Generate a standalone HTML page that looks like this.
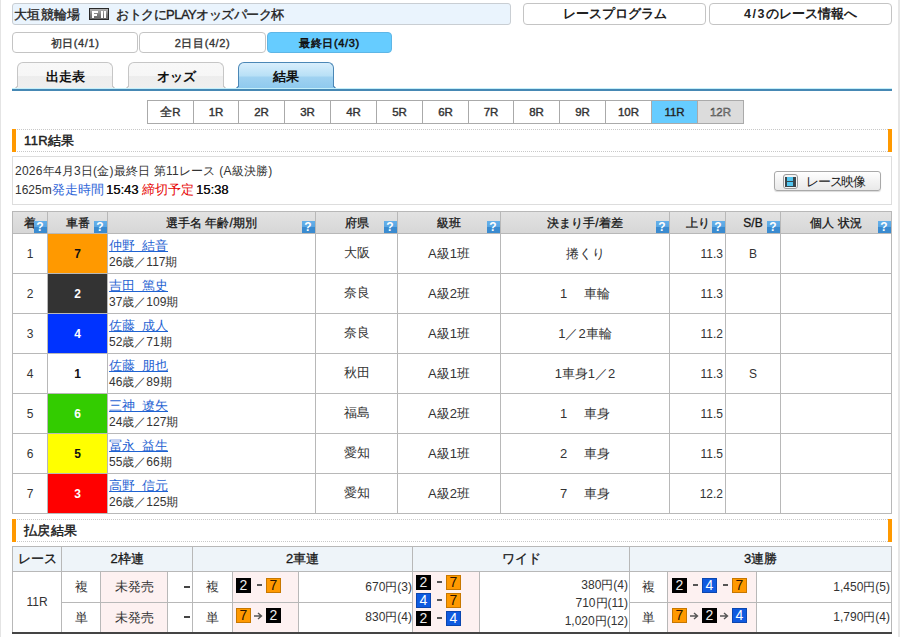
<!DOCTYPE html>
<html><head><meta charset="utf-8"><style>
*{box-sizing:border-box}
html,body{margin:0;padding:0}
body{width:900px;height:637px;overflow:hidden;position:relative;background:#fff;font-family:"Liberation Sans",sans-serif;font-size:12px;color:#333}
.a{position:absolute;white-space:nowrap}
.pbl{left:0;top:0;width:1px;height:637px;background:#e4e4e4}
.pbr{left:898px;top:0;width:2px;height:637px;background:#e6e6e6}
.ttl{left:12px;top:3px;width:499px;height:22px;border:1px solid #c9ced3;border-radius:3px;background:#eaf4fd;font-weight:normal;-webkit-text-stroke:0.35px #222;font-size:13px;color:#222;line-height:20px}
.btn{top:3px;height:22px;border:1px solid #c4c4c4;border-radius:4px;background:#fff;font-weight:bold;font-size:12.5px;color:#222;text-align:center;line-height:21px}
.day{top:32px;height:21px;border:1px solid #c4c4c4;border-radius:4px;background:#fff;font-weight:normal;-webkit-text-stroke:0.35px #333;font-size:11px;letter-spacing:0.6px;color:#333;text-align:center;line-height:20px}
.day.sel{background:#66ccff;border-color:#5eb6e6;-webkit-text-stroke:0.5px #111;color:#111}
.tab{top:62px;height:27px;width:96px;border:1px solid #c6c6c6;border-bottom:none;border-radius:6px 6px 0 0;background:linear-gradient(#f8f8f8 0,#f6f6f6 13px,#ededed 13px,#efefef 100%);font-weight:bold;font-size:13px;color:#111;text-align:center;line-height:28px}
.tab:before,.tab:after{content:'';position:absolute;bottom:0;width:5px;height:5px}
.tab:before{left:-5px;background:radial-gradient(circle at 0 0,transparent 4px,#c6c6c6 4.5px,#c6c6c6 5.2px,#efefef 5.5px)}
.tab:after{right:-5px;background:radial-gradient(circle at 100% 0,transparent 4px,#c6c6c6 4.5px,#c6c6c6 5.2px,#efefef 5.5px)}
.tab.sel:before{background:radial-gradient(circle at 0 0,transparent 4px,#4b87b6 4.5px,#4b87b6 5.2px,#8ec9ee 5.5px)}
.tab.sel:after{background:radial-gradient(circle at 100% 0,transparent 4px,#4b87b6 4.5px,#4b87b6 5.2px,#8ec9ee 5.5px)}
.tab.sel{border-color:#4b87b6;background:linear-gradient(#d8eefc 0,#b8e0f6 13px,#a0d2f1 14px,#8ec9ee 100%)}
.tline{left:12px;top:88px;width:880px;height:1px;background:#c4f0fb}
.tline2{left:12px;top:89px;width:880px;height:2px;background:#4688b4}
.f2{left:76px;top:4px;width:20px;height:12px;background:linear-gradient(#b4b4b4,#7a7a7a 60%,#6a6a6a);border:1px solid #2a2a2a;text-shadow:none}
.f2 i{position:absolute;background:#fff}
.rn{top:100px;height:24px;border:1px solid #aaa;background:#fff;font-weight:normal;-webkit-text-stroke:0.4px #333;font-size:11.5px;color:#333;text-align:center;line-height:22px}
.hd{left:12px;width:880px;height:23px;border-top:1px dotted #c8c8c8;border-bottom:1px dotted #c8c8c8;font-weight:normal;-webkit-text-stroke:0.45px #222;font-size:13px;letter-spacing:0.4px;color:#222;line-height:21px}
.ob{width:4px;background:#f90}
.info{left:12px;top:156px;width:880px;height:49px;border:1px solid #ddd}
.vbtn{left:774px;top:171px;width:107px;height:20px;border:1px solid #a9a9a9;border-radius:3px;background:linear-gradient(#fff,#f3f3f3 50%,#e9e9e9);box-shadow:0 1px 1px rgba(0,0,0,.15);font-size:13px;color:#222;line-height:18px}
.vl{width:1px;background:#b8b8b8}
.hl{height:1px;background:#b8b8b8}
.th{background:linear-gradient(#e3e3e3,#d6d6d6)}
.thx{font-weight:normal;-webkit-text-stroke:0.3px #222;font-size:12px;color:#111;text-align:center;line-height:24px}
.q{width:13px;height:12px;background:linear-gradient(#64b0ea 0,#5aa6e2 50%,#3a8bd0 50%,#3a8bd0 100%);color:#fff;font-weight:bold;font-size:12px;line-height:13px;text-align:center;text-indent:-1px}
.td{font-size:12px;color:#333;text-align:center}
.sh{font-weight:bold;font-size:12px;text-align:center}
.nb{display:inline-block;width:15px;height:15px;font-size:14px;line-height:15px;text-align:center;vertical-align:top;box-shadow:inset 0 0 0 1px rgba(0,0,0,.22)}
.sp{display:inline-block;width:15px;height:15px;position:relative;vertical-align:top}
.sp i{position:absolute;left:6px;top:6px;width:5px;height:1.5px;background:#555}
.sp svg{position:absolute;left:3px;top:4px}
.cb{height:15px;line-height:15px}
.nm{color:#1f63d2;text-decoration:underline;font-size:12px}
</style></head><body>
<div class="a pbl"></div><div class="a pbr"></div>
<div class="a ttl"><span class="a" style="left:1px;top:1px;letter-spacing:0.3px">大垣競輪場</span><span class="a f2"><i style="left:2px;top:2px;width:2px;height:7px"></i><i style="left:2px;top:2px;width:6px;height:2px"></i><i style="left:2px;top:5px;width:5px;height:2px"></i><i style="left:11px;top:2px;width:2px;height:7px"></i><i style="left:14px;top:2px;width:2px;height:7px"></i></span><span class="a" style="left:103px;top:1px;letter-spacing:-0.5px">おトクにPLAYオッズパーク杯</span></div>
<div class="a btn" style="left:523px;width:183px">レースプログラム</div>
<div class="a btn" style="left:709px;width:183px"><span style="letter-spacing:1.6px">4/3</span>のレース情報へ</div>
<div class="a day" style="left:12px;width:126px">初日(4/1)</div>
<div class="a day" style="left:139px;width:127px">2日目(4/2)</div>
<div class="a day sel" style="left:267px;width:125px">最終日(4/3)</div>
<div class="a tab" style="left:17px">出走表</div>
<div class="a tab" style="left:128px">オッズ</div>
<div class="a tab sel" style="left:238px">結果</div>
<div class="a tline"></div><div class="a tline2"></div>
<div class="a rn" style="left:147px;width:47px;">全R</div>
<div class="a rn" style="left:193px;width:46px;">1R</div>
<div class="a rn" style="left:238px;width:47px;">2R</div>
<div class="a rn" style="left:284px;width:47px;">3R</div>
<div class="a rn" style="left:330px;width:47px;">4R</div>
<div class="a rn" style="left:376px;width:47px;">5R</div>
<div class="a rn" style="left:422px;width:47px;">6R</div>
<div class="a rn" style="left:468px;width:46px;">7R</div>
<div class="a rn" style="left:513px;width:47px;">8R</div>
<div class="a rn" style="left:559px;width:47px;">9R</div>
<div class="a rn" style="left:605px;width:47px;">10R</div>
<div class="a rn" style="left:651px;width:47px;background:#66ccff;color:#111;">11R</div>
<div class="a rn" style="left:697px;width:47px;background:#dcdcdc;color:#999;">12R</div>
<div class="a hd" style="top:129px"><span class="a" style="left:12px;top:0">11R結果</span></div>
<div class="a ob" style="left:12px;top:129px;height:23px"></div><div class="a ob" style="left:888px;top:129px;height:23px"></div>
<div class="a info"></div>
<div class="a td" style="left:15px;top:162px;line-height:18px;text-align:left;letter-spacing:0.22px">2026年4月3日(金)最終日 第11レース (A級決勝)</div>
<div class="a td" style="left:15px;top:181px;line-height:18px;text-align:left">1625m</div>
<div class="a td" style="left:52px;top:181px;line-height:18px;text-align:left;color:#2f66d8;font-size:13px">発走時間</div>
<div class="a td" style="left:106px;top:181px;line-height:18px;text-align:left;color:#111;font-size:13px;text-shadow:0.3px 0 0 #111">15:43</div>
<div class="a td" style="left:142px;top:181px;line-height:18px;text-align:left;color:#e60000;font-size:13px">締切予定</div>
<div class="a td" style="left:196px;top:181px;line-height:18px;text-align:left;color:#111;font-size:13px;text-shadow:0.3px 0 0 #111">15:38</div>
<div class="a vbtn"><span class="a" style="left:8px;top:2px;width:15px;height:15px;border:1px solid #9a9a9a;border-radius:3px;background:#f4f4f4"></span><span class="a" style="left:10px;top:5px;width:11px;height:10px;background:#38464c"></span><span class="a" style="left:12px;top:5px;width:6px;height:4px;background:#52c6f0"></span><span class="a" style="left:12px;top:10px;width:6px;height:4px;background:#52c6f0"></span><span class="a" style="left:31px;top:0;font-size:13px;line-height:19px;letter-spacing:-1.2px">レース映像</span></div>
<div class="a th" style="left:12px;top:211px;width:880px;height:23px"></div>
<div class="a thx" style="left:13px;top:211px;width:34px;height:22px">着</div>
<div class="a q" style="left:34px;top:221px">?</div>
<div class="a thx" style="left:48px;top:211px;width:59px;height:22px">車番</div>
<div class="a q" style="left:94px;top:221px">?</div>
<div class="a thx" style="left:108px;top:211px;width:207px;height:22px">選手名 年齢/期別</div>
<div class="a q" style="left:302px;top:221px">?</div>
<div class="a thx" style="left:316px;top:211px;width:81px;height:22px">府県</div>
<div class="a q" style="left:384px;top:221px">?</div>
<div class="a thx" style="left:398px;top:211px;width:102px;height:22px">級班</div>
<div class="a q" style="left:487px;top:221px">?</div>
<div class="a thx" style="left:501px;top:211px;width:168px;height:22px">決まり手/着差</div>
<div class="a q" style="left:656px;top:221px">?</div>
<div class="a thx" style="left:670px;top:211px;width:55px;height:22px">上り</div>
<div class="a q" style="left:712px;top:221px">?</div>
<div class="a thx" style="left:726px;top:211px;width:54px;height:22px">S/B</div>
<div class="a q" style="left:767px;top:221px">?</div>
<div class="a thx" style="left:781px;top:211px;width:110px;height:22px">個人 状況</div>
<div class="a q" style="left:878px;top:221px">?</div>
<div class="a" style="left:48px;top:234px;width:59px;height:39px;background:#ff9900"></div>
<div class="a td" style="left:13px;top:235px;width:34px;line-height:39px">1</div>
<div class="a sh" style="left:48px;top:235px;width:59px;line-height:39px;color:#111">7</div>
<div class="a nm" style="left:109px;top:237px;line-height:17px;font-size:13px">仲野<span style="word-spacing:3.4px"> </span>結音</div>
<div class="a td" style="left:109px;top:254px;line-height:17px;text-align:left">26歳／117期</div>
<div class="a td" style="left:316px;top:233px;width:81px;line-height:39px;font-size:13px">大阪</div>
<div class="a td" style="left:398px;top:234px;width:102px;line-height:39px;font-size:13px">A級1班</div>
<div class="a td" style="left:501px;top:234px;width:168px;line-height:39px;font-size:13px">捲くり</div>
<div class="a td" style="left:670px;top:235px;width:53px;line-height:39px;text-align:right">11.3</div>
<div class="a td" style="left:726px;top:235px;width:54px;line-height:39px">B</div>
<div class="a" style="left:48px;top:274px;width:59px;height:39px;background:#333333"></div>
<div class="a td" style="left:13px;top:275px;width:34px;line-height:39px">2</div>
<div class="a sh" style="left:48px;top:275px;width:59px;line-height:39px;color:#fff">2</div>
<div class="a nm" style="left:109px;top:277px;line-height:17px;font-size:13px">吉田<span style="word-spacing:3.4px"> </span>篤史</div>
<div class="a td" style="left:109px;top:294px;line-height:17px;text-align:left">37歳／109期</div>
<div class="a td" style="left:316px;top:273px;width:81px;line-height:39px;font-size:13px">奈良</div>
<div class="a td" style="left:398px;top:274px;width:102px;line-height:39px;font-size:13px">A級2班</div>
<div class="a td" style="left:501px;top:274px;width:168px;line-height:39px;font-size:13px">1　 車輪</div>
<div class="a td" style="left:670px;top:275px;width:53px;line-height:39px;text-align:right">11.3</div>
<div class="a td" style="left:726px;top:275px;width:54px;line-height:39px"></div>
<div class="a" style="left:48px;top:314px;width:59px;height:39px;background:#0033ff"></div>
<div class="a td" style="left:13px;top:315px;width:34px;line-height:39px">3</div>
<div class="a sh" style="left:48px;top:315px;width:59px;line-height:39px;color:#fff">4</div>
<div class="a nm" style="left:109px;top:317px;line-height:17px;font-size:13px">佐藤<span style="word-spacing:3.4px"> </span>成人</div>
<div class="a td" style="left:109px;top:334px;line-height:17px;text-align:left">52歳／71期</div>
<div class="a td" style="left:316px;top:313px;width:81px;line-height:39px;font-size:13px">奈良</div>
<div class="a td" style="left:398px;top:314px;width:102px;line-height:39px;font-size:13px">A級1班</div>
<div class="a td" style="left:501px;top:314px;width:168px;line-height:39px;font-size:13px">1／2車輪</div>
<div class="a td" style="left:670px;top:315px;width:53px;line-height:39px;text-align:right">11.2</div>
<div class="a td" style="left:726px;top:315px;width:54px;line-height:39px"></div>
<div class="a" style="left:48px;top:354px;width:59px;height:39px;background:#ffffff"></div>
<div class="a td" style="left:13px;top:355px;width:34px;line-height:39px">4</div>
<div class="a sh" style="left:48px;top:355px;width:59px;line-height:39px;color:#111">1</div>
<div class="a nm" style="left:109px;top:357px;line-height:17px;font-size:13px">佐藤<span style="word-spacing:3.4px"> </span>朋也</div>
<div class="a td" style="left:109px;top:374px;line-height:17px;text-align:left">46歳／89期</div>
<div class="a td" style="left:316px;top:353px;width:81px;line-height:39px;font-size:13px">秋田</div>
<div class="a td" style="left:398px;top:354px;width:102px;line-height:39px;font-size:13px">A級1班</div>
<div class="a td" style="left:501px;top:354px;width:168px;line-height:39px;font-size:13px">1車身1／2</div>
<div class="a td" style="left:670px;top:355px;width:53px;line-height:39px;text-align:right">11.3</div>
<div class="a td" style="left:726px;top:355px;width:54px;line-height:39px">S</div>
<div class="a" style="left:48px;top:394px;width:59px;height:39px;background:#33cc00"></div>
<div class="a td" style="left:13px;top:395px;width:34px;line-height:39px">5</div>
<div class="a sh" style="left:48px;top:395px;width:59px;line-height:39px;color:#fff">6</div>
<div class="a nm" style="left:109px;top:397px;line-height:17px;font-size:13px">三神<span style="word-spacing:3.4px"> </span>遼矢</div>
<div class="a td" style="left:109px;top:414px;line-height:17px;text-align:left">24歳／127期</div>
<div class="a td" style="left:316px;top:393px;width:81px;line-height:39px;font-size:13px">福島</div>
<div class="a td" style="left:398px;top:394px;width:102px;line-height:39px;font-size:13px">A級2班</div>
<div class="a td" style="left:501px;top:394px;width:168px;line-height:39px;font-size:13px">1　 車身</div>
<div class="a td" style="left:670px;top:395px;width:53px;line-height:39px;text-align:right">11.5</div>
<div class="a td" style="left:726px;top:395px;width:54px;line-height:39px"></div>
<div class="a" style="left:48px;top:434px;width:59px;height:39px;background:#ffff00"></div>
<div class="a td" style="left:13px;top:435px;width:34px;line-height:39px">6</div>
<div class="a sh" style="left:48px;top:435px;width:59px;line-height:39px;color:#111">5</div>
<div class="a nm" style="left:109px;top:437px;line-height:17px;font-size:13px">冨永<span style="word-spacing:3.4px"> </span>益生</div>
<div class="a td" style="left:109px;top:454px;line-height:17px;text-align:left">55歳／66期</div>
<div class="a td" style="left:316px;top:433px;width:81px;line-height:39px;font-size:13px">愛知</div>
<div class="a td" style="left:398px;top:434px;width:102px;line-height:39px;font-size:13px">A級1班</div>
<div class="a td" style="left:501px;top:434px;width:168px;line-height:39px;font-size:13px">2　 車身</div>
<div class="a td" style="left:670px;top:435px;width:53px;line-height:39px;text-align:right">11.5</div>
<div class="a td" style="left:726px;top:435px;width:54px;line-height:39px"></div>
<div class="a" style="left:48px;top:474px;width:59px;height:39px;background:#ff0000"></div>
<div class="a td" style="left:13px;top:475px;width:34px;line-height:39px">7</div>
<div class="a sh" style="left:48px;top:475px;width:59px;line-height:39px;color:#fff">3</div>
<div class="a nm" style="left:109px;top:477px;line-height:17px;font-size:13px">高野<span style="word-spacing:3.4px"> </span>信元</div>
<div class="a td" style="left:109px;top:494px;line-height:17px;text-align:left">26歳／125期</div>
<div class="a td" style="left:316px;top:473px;width:81px;line-height:39px;font-size:13px">愛知</div>
<div class="a td" style="left:398px;top:474px;width:102px;line-height:39px;font-size:13px">A級2班</div>
<div class="a td" style="left:501px;top:474px;width:168px;line-height:39px;font-size:13px">7　 車身</div>
<div class="a td" style="left:670px;top:475px;width:53px;line-height:39px;text-align:right">12.2</div>
<div class="a td" style="left:726px;top:475px;width:54px;line-height:39px"></div>
<div class="a vl" style="left:12px;top:211px;height:303px"></div>
<div class="a vl" style="left:47px;top:211px;height:303px"></div>
<div class="a vl" style="left:107px;top:211px;height:303px"></div>
<div class="a vl" style="left:315px;top:211px;height:303px"></div>
<div class="a vl" style="left:397px;top:211px;height:303px"></div>
<div class="a vl" style="left:500px;top:211px;height:303px"></div>
<div class="a vl" style="left:669px;top:211px;height:303px"></div>
<div class="a vl" style="left:725px;top:211px;height:303px"></div>
<div class="a vl" style="left:780px;top:211px;height:303px"></div>
<div class="a vl" style="left:891px;top:211px;height:303px"></div>
<div class="a hl" style="left:12px;top:211px;width:880px"></div>
<div class="a hl" style="left:12px;top:233px;width:880px"></div>
<div class="a hl" style="left:12px;top:273px;width:880px"></div>
<div class="a hl" style="left:12px;top:313px;width:880px"></div>
<div class="a hl" style="left:12px;top:353px;width:880px"></div>
<div class="a hl" style="left:12px;top:393px;width:880px"></div>
<div class="a hl" style="left:12px;top:433px;width:880px"></div>
<div class="a hl" style="left:12px;top:473px;width:880px"></div>
<div class="a hl" style="left:12px;top:513px;width:880px"></div>
<div class="a hd" style="top:519px"><span class="a" style="left:12px;top:0">払戻結果</span></div>
<div class="a ob" style="left:12px;top:519px;height:23px"></div><div class="a ob" style="left:888px;top:519px;height:23px"></div>
<div class="a" style="left:12px;top:546px;width:880px;height:25px;background:#eef4f9"></div>
<div class="a" style="left:101px;top:572px;width:66px;height:60px;background:#fdf1f1"></div>
<div class="a" style="left:233px;top:572px;width:65px;height:60px;background:#fdf1f1"></div>
<div class="a" style="left:413px;top:572px;width:66px;height:60px;background:#fdf1f1"></div>
<div class="a" style="left:668px;top:572px;width:88px;height:60px;background:#fdf1f1"></div>
<div class="a thx" style="left:13px;top:547px;width:48px;height:24px;line-height:24px;font-size:13px">レース</div>
<div class="a thx" style="left:62px;top:547px;width:130px;height:24px;line-height:24px;font-size:13px">2枠連</div>
<div class="a thx" style="left:193px;top:547px;width:219px;height:24px;line-height:24px;font-size:13px">2車連</div>
<div class="a thx" style="left:413px;top:547px;width:216px;height:24px;line-height:24px;font-size:13px">ワイド</div>
<div class="a thx" style="left:630px;top:547px;width:261px;height:24px;line-height:24px;font-size:13px">3連勝</div>
<div class="a vl" style="left:12px;top:546px;height:86px"></div>
<div class="a vl" style="left:61px;top:546px;height:86px"></div>
<div class="a vl" style="left:192px;top:546px;height:86px"></div>
<div class="a vl" style="left:412px;top:546px;height:86px"></div>
<div class="a vl" style="left:629px;top:546px;height:86px"></div>
<div class="a vl" style="left:891px;top:546px;height:86px"></div>
<div class="a vl" style="left:100px;top:571px;height:61px"></div>
<div class="a vl" style="left:167px;top:571px;height:61px"></div>
<div class="a vl" style="left:232px;top:571px;height:61px"></div>
<div class="a vl" style="left:298px;top:571px;height:61px"></div>
<div class="a vl" style="left:479px;top:571px;height:61px"></div>
<div class="a vl" style="left:667px;top:571px;height:61px"></div>
<div class="a vl" style="left:756px;top:571px;height:61px"></div>
<div class="a hl" style="left:12px;top:546px;width:880px"></div>
<div class="a hl" style="left:12px;top:571px;width:880px"></div>
<div class="a hl" style="left:61px;top:602px;width:351px"></div>
<div class="a hl" style="left:629px;top:602px;width:262px"></div>
<div class="a" style="left:12px;top:632px;width:880px;height:2px;background:#444"></div>
<div class="a td" style="left:13px;top:572px;width:48px;line-height:60px;text-align:center;">11R</div>
<div class="a td" style="left:62px;top:572px;width:38px;line-height:30px;text-align:center;font-size:13px">複</div>
<div class="a td" style="left:101px;top:572px;width:66px;line-height:30px;text-align:center;font-size:13px">未発売</div>
<div class="a" style="left:184px;top:586px;width:6px;height:1.5px;background:#444"></div>
<div class="a td" style="left:193px;top:572px;width:39px;line-height:30px;text-align:center;font-size:13px">複</div>
<div class="a td" style="left:62px;top:603px;width:38px;line-height:29px;text-align:center;font-size:13px">単</div>
<div class="a td" style="left:101px;top:603px;width:66px;line-height:29px;text-align:center;font-size:13px">未発売</div>
<div class="a" style="left:184px;top:616px;width:6px;height:1.5px;background:#444"></div>
<div class="a td" style="left:193px;top:603px;width:39px;line-height:29px;text-align:center;font-size:13px">単</div>
<div class="a td" style="left:630px;top:572px;width:37px;line-height:30px;text-align:center;font-size:13px">複</div>
<div class="a td" style="left:630px;top:603px;width:37px;line-height:29px;text-align:center;font-size:13px">単</div>
<div class="a cb" style="left:236px;top:578px"><span class="nb" style="background:#000;color:#eee">2</span><span class="sp"><i></i></span><span class="nb" style="background:#ff9900;color:#2a1500">7</span></div>
<div class="a cb" style="left:236px;top:608px"><span class="nb" style="background:#ff9900;color:#2a1500">7</span><span class="sp"><svg width="9" height="8" viewBox="0 0 9 8"><path d="M0 4H7M4 1L7.5 4L4 7" stroke="#555" stroke-width="1.4" fill="none"/></svg></span><span class="nb" style="background:#000;color:#eee">2</span></div>
<div class="a td" style="left:299px;top:572px;width:113px;line-height:30px;text-align:right;padding-right:0">670円(3)</div>
<div class="a td" style="left:299px;top:603px;width:113px;line-height:29px;text-align:right;padding-right:0">830円(4)</div>
<div class="a cb" style="left:416px;top:575px"><span class="nb" style="background:#000;color:#eee">2</span><span class="sp"><i></i></span><span class="nb" style="background:#ff9900;color:#2a1500">7</span></div>
<div class="a cb" style="left:416px;top:593px"><span class="nb" style="background:#0f5ae0;color:#fff">4</span><span class="sp"><i></i></span><span class="nb" style="background:#ff9900;color:#2a1500">7</span></div>
<div class="a cb" style="left:416px;top:611px"><span class="nb" style="background:#000;color:#eee">2</span><span class="sp"><i></i></span><span class="nb" style="background:#0f5ae0;color:#fff">4</span></div>
<div class="a td" style="left:480px;top:577.0px;width:148px;line-height:16px;text-align:right">380円(4)</div>
<div class="a td" style="left:480px;top:594.8px;width:148px;line-height:16px;text-align:right">710円(11)</div>
<div class="a td" style="left:480px;top:612.6px;width:148px;line-height:16px;text-align:right">1,020円(12)</div>
<div class="a cb" style="left:672px;top:578px"><span class="nb" style="background:#000;color:#eee">2</span><span class="sp"><i></i></span><span class="nb" style="background:#0f5ae0;color:#fff">4</span><span class="sp"><i></i></span><span class="nb" style="background:#ff9900;color:#2a1500">7</span></div>
<div class="a cb" style="left:672px;top:608px"><span class="nb" style="background:#ff9900;color:#2a1500">7</span><span class="sp"><svg width="9" height="8" viewBox="0 0 9 8"><path d="M0 4H7M4 1L7.5 4L4 7" stroke="#555" stroke-width="1.4" fill="none"/></svg></span><span class="nb" style="background:#000;color:#eee">2</span><span class="sp"><svg width="9" height="8" viewBox="0 0 9 8"><path d="M0 4H7M4 1L7.5 4L4 7" stroke="#555" stroke-width="1.4" fill="none"/></svg></span><span class="nb" style="background:#0f5ae0;color:#fff">4</span></div>
<div class="a td" style="left:757px;top:572px;width:134px;line-height:30px;text-align:right;padding-right:1px">1,450円(5)</div>
<div class="a td" style="left:757px;top:603px;width:134px;line-height:29px;text-align:right;padding-right:1px">1,790円(4)</div>
</body></html>
